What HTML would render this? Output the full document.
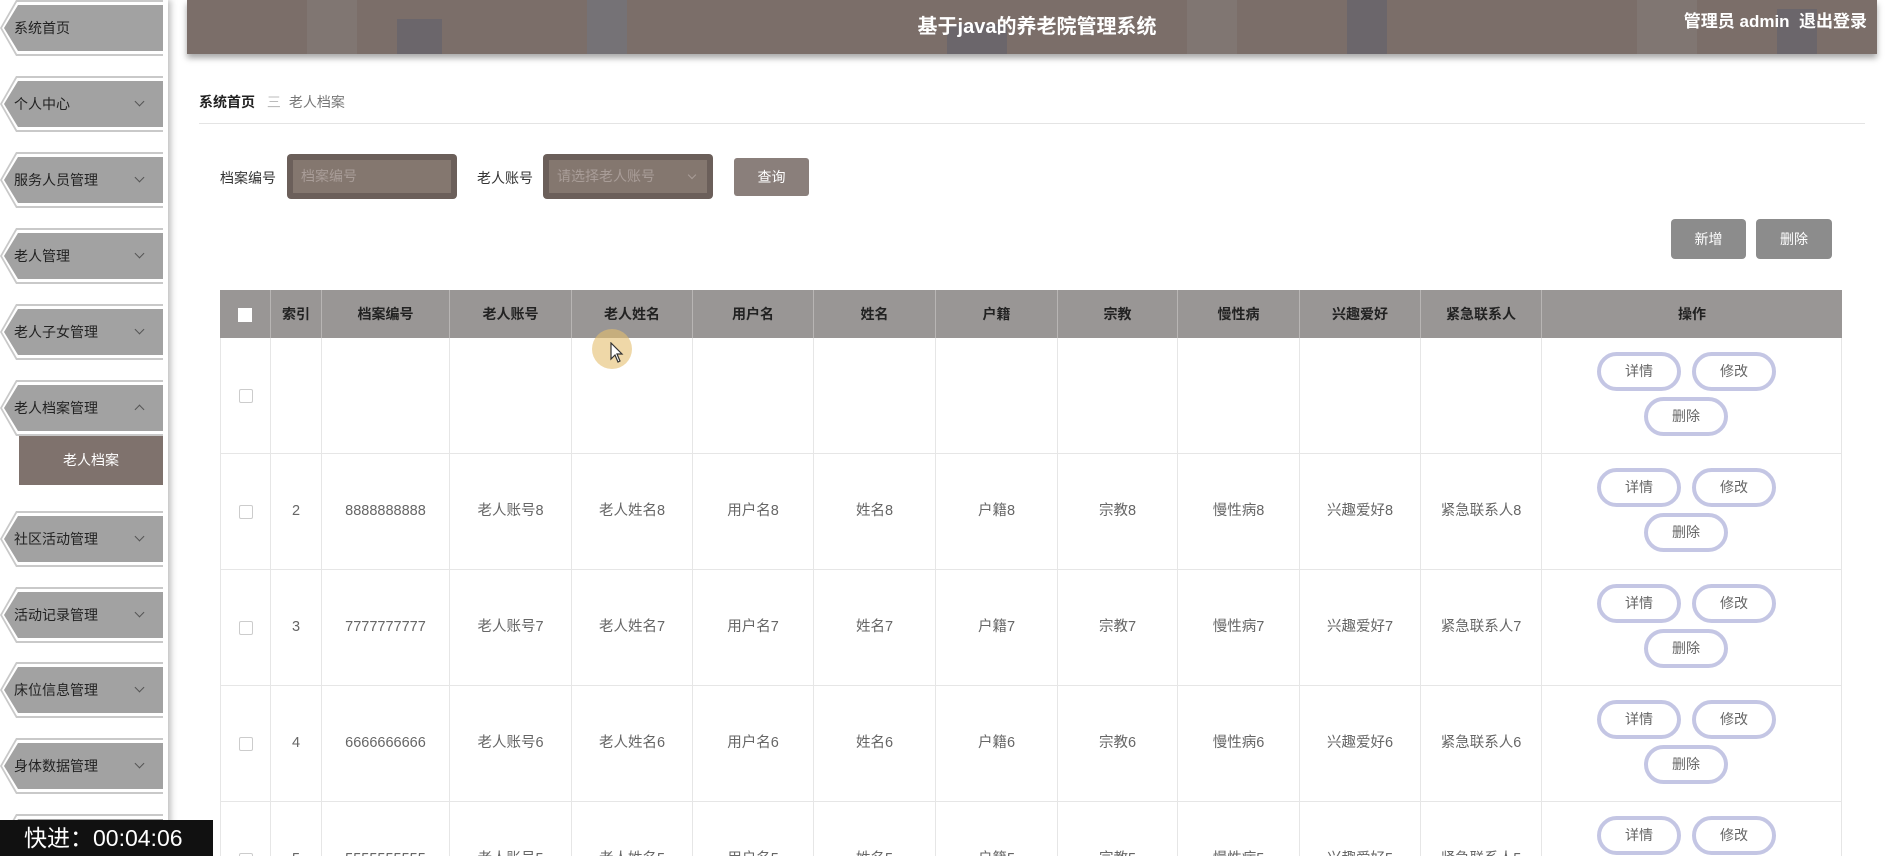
<!DOCTYPE html>
<html style="width:1885px;height:856px;overflow:hidden"><head><meta charset="utf-8"><style>
*{margin:0;padding:0;box-sizing:border-box}
body{width:1885px;height:856px;overflow:hidden;background:#fff;font-family:"Liberation Sans","Noto Sans CJK SC",sans-serif;position:relative;color:#666}
.a{position:absolute}
#side{left:0;top:0;width:168px;height:856px;background:#fff;box-shadow:3px 0 6px rgba(0,0,0,.25)}
.mi{position:absolute;left:0;width:163px;height:56px;background:#c9c9c9;clip-path:polygon(16px 0,100% 0,100% 100%,16px 100%,0 50%)}
.mi .in1{position:absolute;left:2px;top:2px;right:0;bottom:2px;background:#fff;clip-path:polygon(15px 0,100% 0,100% 100%,15px 100%,0 50%)}
.mi .in{position:absolute;left:4px;top:5px;right:0;bottom:5px;background:#a2a2a2;clip-path:polygon(14px 0,100% 0,100% 100%,14px 100%,0 50%);font-size:14px;color:#222;line-height:46px;padding-left:10px}
.mi .ch{position:absolute;right:20px;top:17px;width:7px;height:7px;border-right:1px solid #555;border-bottom:1px solid #555;transform:rotate(45deg)}
.mi .ch.up{top:21px;transform:rotate(-135deg)}
#hdr{left:187px;top:0;width:1690px;height:54px;background:#7b6e69;box-shadow:0 4px 6px rgba(0,0,0,.35);overflow:hidden}
.b{position:absolute;bottom:0;background:#8a8684;opacity:.35}
.th{position:absolute;top:290px;height:48px;background:#999695;color:#222;font-size:14px;font-weight:bold;text-align:center;line-height:48px;border-right:1px solid #b8b5b4}
.td{position:absolute;height:116px;border-right:1px solid #e6e6e6;border-bottom:1px solid #e6e6e6;font-size:14.5px;color:#666;text-align:center;line-height:115px}
.ob{position:absolute;width:84px;height:39px;border:4px solid #c4c6e4;border-radius:20px;background:#fff;font-size:14px;color:#666;text-align:center;line-height:31px}
.cb{position:absolute;width:14px;height:14px;border:1px solid #ccc;background:#fff;border-radius:2px}
</style></head><body>
<div id="hdr" class="a">
<div class="b" style="left:120px;width:50px;height:54px"></div>
<div class="b" style="left:210px;width:45px;height:35px;background:#4c5a70"></div>
<div class="b" style="left:400px;width:40px;height:54px;background:#6a7a90"></div>
<div class="b" style="left:760px;width:60px;height:30px;background:#4c5a70"></div>
<div class="b" style="left:1000px;width:50px;height:54px"></div>
<div class="b" style="left:1160px;width:40px;height:54px;background:#4c5a70"></div>
<div class="b" style="left:1450px;width:60px;height:54px"></div>
<div class="b" style="left:1590px;width:40px;height:45px;background:#4c5a70"></div>
<div class="a" style="left:0;width:1700px;top:10px;text-align:center;color:#fff;font-size:20px;font-weight:bold">基于java的养老院管理系统</div>
<div class="a" style="right:10px;top:7px;color:#fff;font-size:17px;font-weight:bold">管理员 admin&nbsp;&nbsp;退出登录</div>
</div>
<div id="side" class="a">
<div class="mi" style="top:0"><div class="in1"></div><div class="in">系统首页</div></div>
<div class="mi" style="top:76px"><div class="in1"></div><div class="in">个人中心<span class="ch"></span></div></div>
<div class="mi" style="top:152px"><div class="in1"></div><div class="in">服务人员管理<span class="ch"></span></div></div>
<div class="mi" style="top:228px"><div class="in1"></div><div class="in">老人管理<span class="ch"></span></div></div>
<div class="mi" style="top:304px"><div class="in1"></div><div class="in">老人子女管理<span class="ch"></span></div></div>
<div class="mi" style="top:380px"><div class="in1"></div><div class="in">老人档案管理<span class="ch up"></span></div></div>
<div class="a" style="left:19px;top:436px;width:144px;height:49px;background:#7f726d;color:#fff;font-size:14px;text-align:center;line-height:49px">老人档案</div>
<div class="mi" style="top:511px"><div class="in1"></div><div class="in">社区活动管理<span class="ch"></span></div></div>
<div class="mi" style="top:587px"><div class="in1"></div><div class="in">活动记录管理<span class="ch"></span></div></div>
<div class="mi" style="top:662px"><div class="in1"></div><div class="in">床位信息管理<span class="ch"></span></div></div>
<div class="mi" style="top:738px"><div class="in1"></div><div class="in">身体数据管理<span class="ch"></span></div></div>
<div class="mi" style="top:814px"><div class="in1"></div><div class="in"></div></div>
</div>
<div class="a" style="left:199px;top:92px;font-size:14px"><b style="color:#222">系统首页</b> <span style="color:#bbb;margin:0 8px">三</span><span style="color:#777">老人档案</span></div>
<div class="a" style="left:199px;top:123px;width:1666px;height:1px;background:#e4e4e4"></div>
<div class="a" style="left:220px;top:168px;font-size:14px;color:#333">档案编号</div>
<div class="a" style="left:287px;top:154px;width:170px;height:45px;background:#6b5f5a;border-radius:4px"><div class="a" style="left:6px;top:6px;right:6px;bottom:6px;background:#84776f;color:#a99d98;font-size:14px;line-height:33px;padding-left:8px">档案编号</div></div>
<div class="a" style="left:477px;top:168px;font-size:14px;color:#333">老人账号</div>
<div class="a" style="left:543px;top:154px;width:170px;height:45px;background:#6b5f5a;border-radius:4px"><div class="a" style="left:6px;top:6px;right:6px;bottom:6px;background:#84776f;color:#a99d98;font-size:14px;line-height:33px;padding-left:8px">请选择老人账号<span style="position:absolute;right:12px;top:12px;width:6px;height:6px;border-right:1px solid #a99d98;border-bottom:1px solid #a99d98;transform:rotate(45deg)"></span></div></div>
<div class="a" style="left:734px;top:158px;width:75px;height:38px;background:#8a7f7b;border-radius:3px;color:#fff;font-size:14px;text-align:center;line-height:38px">查询</div>
<div class="a" style="left:1671px;top:219px;width:75px;height:40px;background:#8c8c8c;border-radius:4px;color:#fff;font-size:14px;text-align:center;line-height:40px">新增</div>
<div class="a" style="left:1756px;top:219px;width:76px;height:40px;background:#8c8c8c;border-radius:4px;color:#fff;font-size:14px;text-align:center;line-height:40px">删除</div>
<div class="th" style="left:220px;width:51px"><span style="display:inline-block;width:14px;height:14px;background:#fff;vertical-align:middle"></span></div>
<div class="th" style="left:271px;width:51px">索引</div>
<div class="th" style="left:322px;width:128px">档案编号</div>
<div class="th" style="left:450px;width:122px">老人账号</div>
<div class="th" style="left:572px;width:121px">老人姓名</div>
<div class="th" style="left:693px;width:121px">用户名</div>
<div class="th" style="left:814px;width:122px">姓名</div>
<div class="th" style="left:936px;width:122px">户籍</div>
<div class="th" style="left:1058px;width:120px">宗教</div>
<div class="th" style="left:1178px;width:122px">慢性病</div>
<div class="th" style="left:1300px;width:121px">兴趣爱好</div>
<div class="th" style="left:1421px;width:121px">紧急联系人</div>
<div class="th" style="left:1542px;width:300px;border-right:none">操作</div>
<div class="a" style="left:220px;top:338px;width:1px;height:518px;background:#e6e6e6"></div>
<div id="rows"></div>
<script>
var L=[220,271,322,450,572,693,814,936,1058,1178,1300,1421,1542,1842];
var data=[null,[2,'8888888888',8],[3,'7777777777',7],[4,'6666666666',6],[5,'5555555555',5]];
var h='';
data.forEach(function(d,r){var t=338+r*116;
var v=d?['',d[0],d[1],'老人账号'+d[2],'老人姓名'+d[2],'用户名'+d[2],'姓名'+d[2],'户籍'+d[2],'宗教'+d[2],'慢性病'+d[2],'兴趣爱好'+d[2],'紧急联系人'+d[2],'']:['','','','','','','','','','','','',''];
for(var i=0;i<13;i++){h+='<div class="td" style="left:'+L[i]+'px;top:'+t+'px;width:'+(L[i+1]-L[i])+'px">'+v[i]+'</div>';}
h+='<div class="cb" style="left:239px;top:'+(t+51)+'px"></div>';
h+='<div class="ob" style="left:1597px;top:'+(t+14)+'px">详情</div><div class="ob" style="left:1692px;top:'+(t+14)+'px">修改</div><div class="ob" style="left:1644px;top:'+(t+59)+'px">删除</div>';
});
document.getElementById('rows').innerHTML=h;
</script>
<div class="a" style="left:592px;top:329px;width:40px;height:40px;border-radius:50%;background:rgba(228,190,110,.6)"></div>
<svg class="a" style="left:610px;top:342px" width="14" height="22" viewBox="0 0 14 22"><path d="M1 1 L1 17 L5 13 L8 20 L10 19 L7 12 L12 12 Z" fill="#fff" stroke="#333" stroke-width="1.2"/></svg>
<div class="a" style="left:0;top:820px;width:213px;height:36px;background:#111;color:#fff;font-size:23px;line-height:36px;padding-left:24px">快进：00:04:06</div>
</body></html>
